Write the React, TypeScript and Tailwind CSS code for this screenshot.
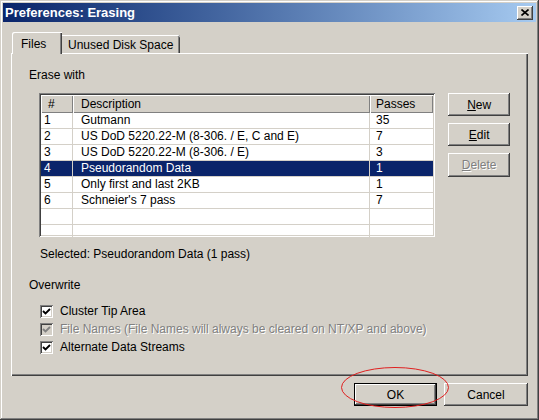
import * as React from "react";

const raised =
  "shadow-[inset_-1px_-1px_0_#404040,inset_1px_1px_0_#ffffff,inset_-2px_-2px_0_#808080,inset_2px_2px_0_#d4d0c8]";

type Method = { n: number; description: string; passes: number };

const methods: Method[] = [
  { n: 1, description: "Gutmann", passes: 35 },
  { n: 2, description: "US DoD 5220.22-M (8-306. / E, C and E)", passes: 7 },
  { n: 3, description: "US DoD 5220.22-M (8-306. / E)", passes: 3 },
  { n: 4, description: "Pseudorandom Data", passes: 1 },
  { n: 5, description: "Only first and last 2KB", passes: 1 },
  { n: 6, description: "Schneier's 7 pass", passes: 7 },
];

function Button({
  children,
  className = "",
  disabled = false,
}: {
  children: React.ReactNode;
  className?: string;
  disabled?: boolean;
}) {
  return (
    <div
      className={`flex items-center justify-center bg-[#d4d0c8] ${raised} ${
        disabled ? "text-[#808080] [text-shadow:1px_1px_0_#ffffff]" : "text-black"
      } ${className}`}
    >
      {children}
    </div>
  );
}

function Checkbox({ disabled = false }: { disabled?: boolean }) {
  return (
    <div
      className={`flex h-[13px] w-[13px] shrink-0 items-center justify-center shadow-[inset_1px_1px_0_#808080,inset_-1px_-1px_0_#ffffff,inset_2px_2px_0_#404040,inset_-2px_-2px_0_#d4d0c8] ${
        disabled ? "bg-[#d4d0c8]" : "bg-white"
      }`}
    >
      <svg width="9" height="9" viewBox="0 0 9 9">
        <path
          d="M1 4 L3.5 6.5 L8 2"
          fill="none"
          stroke={disabled ? "#808080" : "#000000"}
          strokeWidth="1.9"
        />
      </svg>
    </div>
  );
}

export default function App() {
  const selected = 4;

  return (
    <div className="relative flex h-[420px] w-[539px] flex-col bg-[#d4d0c8] p-[3px] font-['Liberation_Sans',Arial,sans-serif] text-[12px] leading-[14px] text-black shadow-[inset_-1px_-1px_0_#404040,inset_1px_1px_0_#d4d0c8,inset_-2px_-2px_0_#808080,inset_2px_2px_0_#ffffff]">
      {/* Title bar */}
      <div className="flex h-[19px] items-center justify-between bg-gradient-to-r from-[#0a246a] to-[#a6caf0] pl-[2px] pr-[3px]">
        <span className="text-[13px] font-bold text-white">Preferences: Erasing</span>
        <div className={`flex h-[14px] w-[16px] items-center justify-center bg-[#d4d0c8] ${raised}`}>
          <svg width="8" height="7" viewBox="0 0 8 7">
            <path d="M0.5 0.5 L7.5 6.5 M7.5 0.5 L0.5 6.5" stroke="#000" strokeWidth="1.6" />
          </svg>
        </div>
      </div>

      {/* Tabs */}
      <div className="relative z-10 -mb-px mt-[10px] flex items-end pl-[9px]">
        <div className="flex h-[22px] w-[50px] items-start rounded-tl-[2px] bg-[#d4d0c8] pl-[9px] pt-[5px] shadow-[inset_1px_1px_0_#ffffff,inset_-1px_0_0_#404040,inset_-2px_0_0_#808080]">
          Files
        </div>
        <div className="mb-px flex h-[18px] w-[118px] items-start rounded-tr-[2px] pl-[6px] pt-[3px] shadow-[inset_0_1px_0_#ffffff,inset_-1px_0_0_#404040,inset_-2px_0_0_#808080]">
          Unused Disk Space
        </div>
      </div>

      {/* Tab panel */}
      <div className="ml-[8px] flex h-[323px] w-[517px] flex-col px-[18px] pt-[15px] shadow-[inset_1px_1px_0_#ffffff,inset_-1px_-1px_0_#404040,inset_-2px_-2px_0_#808080]">
        <div>Erase with</div>

        <div className="mt-[11px] flex items-start">
          {/* List */}
          <div className="ml-[10px] h-[144px] w-[399px] overflow-hidden bg-white p-[2px] shadow-[inset_1px_1px_0_#808080,inset_-1px_-1px_0_#ffffff,inset_2px_2px_0_#404040,inset_-2px_-2px_0_#d4d0c8]">
            <div className="flex h-[18px] bg-[#d4d0c8]">
              <div className="flex w-[32px] items-center pl-[7px] shadow-[inset_1px_1px_0_#ffffff,inset_-1px_-1px_0_#808080]">
                #
              </div>
              <div className="flex w-[297px] items-center pl-[8px] shadow-[inset_1px_1px_0_#ffffff,inset_-1px_-1px_0_#808080]">
                Description
              </div>
              <div className="flex flex-1 items-center pl-[6px] shadow-[inset_1px_1px_0_#ffffff,inset_-1px_-1px_0_#808080]">
                Passes
              </div>
            </div>
            {[...methods, null, null].map((m, i) => {
              const isSel = m?.n === selected;
              return (
                <div
                  key={i}
                  className={`flex h-[16px] border-b border-[#d4d0c8] leading-[15px] ${
                    isSel ? "bg-[#0a246a] text-white" : ""
                  }`}
                >
                  <div className="w-[32px] border-r border-[#d4d0c8] pl-[3px]">{m?.n}</div>
                  <div className="w-[297px] border-r border-[#d4d0c8] pl-[8px]">{m?.description}</div>
                  <div className="flex-1 pl-[6px]">{m?.passes}</div>
                </div>
              );
            })}
          </div>

          {/* Side buttons */}
          <div className="ml-[13px] flex w-[62px] flex-col gap-[7px]">
            <Button className="h-[23px]">
              <span>
                <span className="underline">N</span>ew
              </span>
            </Button>
            <Button className="h-[23px]">
              <span>
                <span className="underline">E</span>dit
              </span>
            </Button>
            <Button className="h-[24px]" disabled>
              <span>
                <span className="underline">D</span>elete
              </span>
            </Button>
          </div>
        </div>

        <div className="ml-[11px] mt-[10px]">Selected: Pseudorandom Data (1 pass)</div>

        <div className="mt-[17px]">Overwrite</div>

        <div className="ml-[11px] mt-[10px] flex flex-col">
          <div className="flex h-[18px] items-center gap-[7px]">
            <Checkbox />
            <span>Cluster Tip Area</span>
          </div>
          <div className="flex h-[18px] items-center gap-[7px]">
            <Checkbox disabled />
            <span className="text-[#808080] [text-shadow:1px_1px_0_#ffffff]">
              File Names (File Names will always be cleared on NT/XP and above)
            </span>
          </div>
          <div className="flex h-[18px] items-center gap-[7px]">
            <Checkbox />
            <span>Alternate Data Streams</span>
          </div>
        </div>
      </div>

      {/* Dialog buttons */}
      <div className="mr-[8px] mt-[7px] flex justify-end gap-[7px]">
        <div className="h-[23px] w-[83px] border border-black">
          <Button className="h-full w-full">OK</Button>
        </div>
        <Button className="h-[23px] w-[84px]">Cancel</Button>
      </div>

      {/* Red annotation ring */}
      <svg className="pointer-events-none absolute left-[340px] top-[366px]" width="110" height="43" viewBox="0 0 110 43">
        <ellipse cx="55" cy="21.5" rx="53.5" ry="20" fill="none" stroke="#e02020" strokeWidth="1" />
      </svg>
    </div>
  );
}
